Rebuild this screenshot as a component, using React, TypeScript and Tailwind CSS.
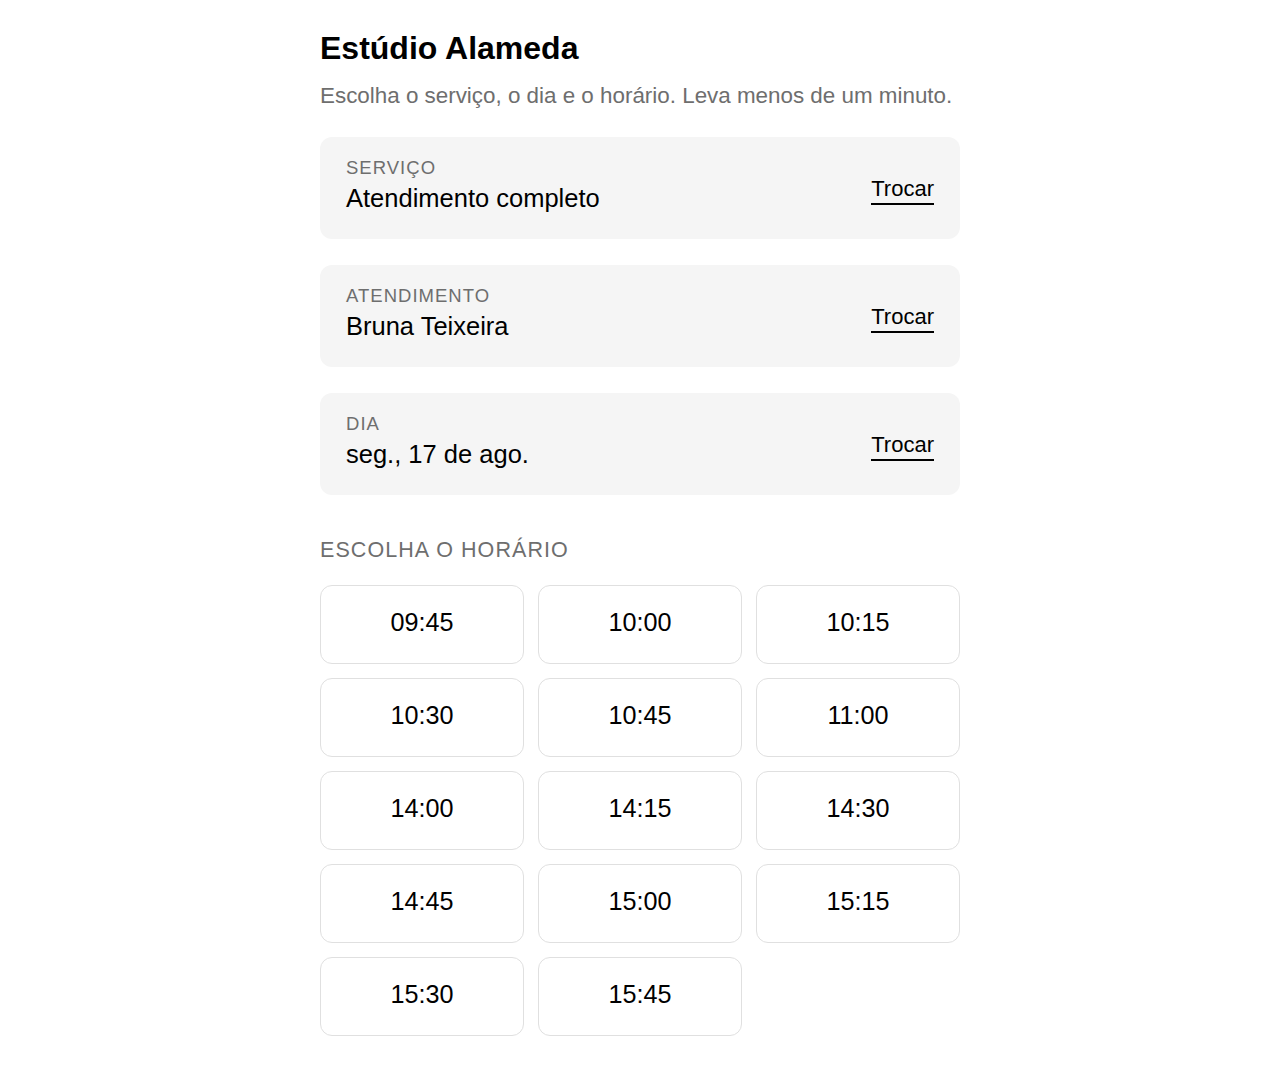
import React from "react";

interface ISummaryRow {
  label: string;
  value: string;
}

const rows: ISummaryRow[] = [
  { label: "Serviço", value: "Atendimento completo" },
  { label: "Atendimento", value: "Bruna Teixeira" },
  { label: "Dia", value: "seg., 17 de ago." },
];

const slots: string[] = [
  "09:45", "10:00", "10:15",
  "10:30", "10:45", "11:00",
  "14:00", "14:15", "14:30",
  "14:45", "15:00", "15:15",
  "15:30", "15:45",
];

const App = () => {
  return (
    <div className="min-h-screen bg-white text-black" style={{ fontFamily: '"Liberation Sans", Arial, sans-serif' }}>
      <div className="mx-auto w-[640px] pt-[30px] pb-10">
        <h1 className="text-[32px] leading-[36px] font-bold">Estúdio Alameda</h1>
        <p className="mt-4 text-[22.4px] leading-[28px] text-[#6e6e6e]">
          Escolha o serviço, o dia e o horário. Leva menos de um minuto.
        </p>

        <div className="mt-[27px] flex flex-col gap-[26px]">
          {rows.map((row) => (
            <div key={row.label} className="flex items-center justify-between rounded-xl bg-[#f5f5f5] px-[26px] pt-[20px] pb-[26px]">
              <div className="flex flex-col gap-1">
                <span className="text-[18.5px] leading-[22px] uppercase tracking-[0.055em] text-[#6e6e6e]">{row.label}</span>
                <span className="text-[25.5px] leading-[30px]">{row.value}</span>
              </div>
              <button className="mt-[10px] border-b-2 border-black text-[22px] leading-[26px] pb-[1px]">Trocar</button>
            </div>
          ))}
        </div>

        <h2 className="mt-[41px] text-[21.5px] leading-[28px] uppercase tracking-[0.05em] text-[#6e6e6e]">Escolha o horário</h2>

        <div className="mt-[21px] grid grid-cols-3 gap-[14px]">
          {slots.map((slot) => (
            <button key={slot} className="h-[79px] rounded-[12px] border border-[#e0e0e0] bg-white pb-[3px] text-[25.2px]">
              {slot}
            </button>
          ))}
        </div>
      </div>
    </div>
  );
};

export default App;
